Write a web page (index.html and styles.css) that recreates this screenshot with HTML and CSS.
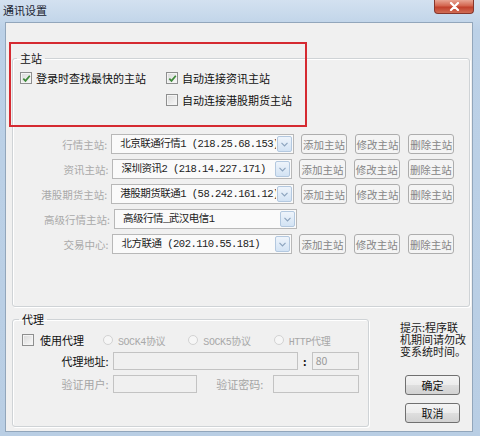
FILE: index.html
```html
<!DOCTYPE html>
<html>
<head>
  <meta charset="utf-8">
  <title>通讯设置</title>
  <link rel="stylesheet" href="styles.css">
</head>
<body>
  <div class="window">
    <div class="titlebar">
      <span class="title">通讯设置</span>
      <span class="close">
        <svg width="11" height="9" viewBox="0 0 11 9"><path d="M2 1 L9 8 M9 1 L2 8" stroke="#fff" stroke-width="2.2" stroke-linecap="round"/></svg>
      </span>
    </div>

    <div class="client">
      <!-- server group -->
      <fieldset class="group group-main">
        <legend>主站</legend>
        <div class="opts">
          <label class="chk"><span class="box on"><svg width="9" height="9" viewBox="0 0 9 9"><path d="M1.3 4.6 L3.5 6.9 L7.8 1.8" stroke="#3f8a3a" stroke-width="1.7" fill="none"/></svg></span>登录时查找最快的主站</label>
          <label class="chk"><span class="box on"><svg width="9" height="9" viewBox="0 0 9 9"><path d="M1.3 4.6 L3.5 6.9 L7.8 1.8" stroke="#3f8a3a" stroke-width="1.7" fill="none"/></svg></span>自动连接资讯主站</label>
          <span></span>
          <label class="chk"><span class="box"></span>自动连接港股期货主站</label>
        </div>

        <div class="servers">
          <div class="srow">
            <span class="lbl">行情主站:</span>
            <div class="combo"><span class="val">北京联通行情1 (218.25.68.153)</span><span class="drop"><svg width="7" height="5" viewBox="0 0 7 5"><path d="M0.5 0.8 L3.5 3.8 L6.5 0.8" stroke="#8da4bf" stroke-width="1.2" fill="none"/></svg></span></div>
            <button class="btn">添加主站</button>
            <button class="btn">修改主站</button>
            <button class="btn">删除主站</button>
          </div>
          <div class="srow">
            <span class="lbl">资讯主站:</span>
            <div class="combo"><span class="val">深圳资讯2 (218.14.227.171)</span><span class="drop"><svg width="7" height="5" viewBox="0 0 7 5"><path d="M0.5 0.8 L3.5 3.8 L6.5 0.8" stroke="#8da4bf" stroke-width="1.2" fill="none"/></svg></span></div>
            <button class="btn">添加主站</button>
            <button class="btn">修改主站</button>
            <button class="btn">删除主站</button>
          </div>
          <div class="srow">
            <span class="lbl">港股期货主站:</span>
            <div class="combo"><span class="val">港股期货联通1 (58.242.161.12)</span><span class="drop"><svg width="7" height="5" viewBox="0 0 7 5"><path d="M0.5 0.8 L3.5 3.8 L6.5 0.8" stroke="#8da4bf" stroke-width="1.2" fill="none"/></svg></span></div>
            <button class="btn">添加主站</button>
            <button class="btn">修改主站</button>
            <button class="btn">删除主站</button>
          </div>
          <div class="srow">
            <span class="lbl">高级行情主站:</span>
            <div class="combo"><span class="val">高级行情_武汉电信1</span><span class="drop"><svg width="7" height="5" viewBox="0 0 7 5"><path d="M0.5 0.8 L3.5 3.8 L6.5 0.8" stroke="#8da4bf" stroke-width="1.2" fill="none"/></svg></span></div>
          </div>
          <div class="srow">
            <span class="lbl">交易中心:</span>
            <div class="combo"><span class="val">北方联通 (202.110.55.181)</span><span class="drop"><svg width="7" height="5" viewBox="0 0 7 5"><path d="M0.5 0.8 L3.5 3.8 L6.5 0.8" stroke="#8da4bf" stroke-width="1.2" fill="none"/></svg></span></div>
            <button class="btn">添加主站</button>
            <button class="btn">修改主站</button>
            <button class="btn">删除主站</button>
          </div>
        </div>
      </fieldset>

      <div class="bottom">
        <!-- proxy group -->
        <fieldset class="group group-proxy">
          <legend>代理</legend>
          <div class="prow row-a">
            <label class="chk use"><span class="box"></span>使用代理</label>
            <span class="radio"><span class="dot"></span>SOCK4协议</span>
            <span class="radio"><span class="dot"></span>SOCK5协议</span>
            <span class="radio"><span class="dot"></span>HTTP代理</span>
          </div>
          <div class="prow">
            <span class="plbl on">代理地址:</span>
            <span class="field addr"></span>
            <span class="sep">:</span>
            <span class="field port">80</span>
          </div>
          <div class="prow">
            <span class="plbl">验证用户:</span>
            <span class="field user"></span>
            <span class="plbl pw">验证密码:</span>
            <span class="field pass"></span>
          </div>
        </fieldset>

        <div class="side">
          <div class="hint">提示:程序联<br>机期间请勿改<br>变系统时间。</div>
          <button class="okbtn first">确定</button>
          <button class="okbtn">取消</button>
        </div>
      </div>
    </div>

    <div class="mark"></div>
  </div>
</body>
</html>
```

FILE: styles.css
```css
body {
  margin: 0;
  font-family: "Noto Sans CJK SC", sans-serif;
  font-size: 11px;
}

.window {
  position: relative;
  width: 480px;
  height: 436px;
  background: linear-gradient(#d3e1f0, #bcd1e7 30px, #b9cee4);
  display: flex;
  flex-direction: column;
}

.titlebar {
  height: 22px;
  flex-shrink: 0;
  display: flex;
  justify-content: space-between;
}

.title {
  padding-left: 3px;
  line-height: 20px;
  font-size: 11px;
  color: #1b2431;
}

.close {
  width: 40px;
  height: 14px;
  margin-right: 6px;
  box-sizing: border-box;
  border: 1px solid #86362c;
  border-top: none;
  border-radius: 0 0 4px 4px;
  background: linear-gradient(#e8a594, #d3654f 45%, #c1402c 55%, #d06d55);
  display: flex;
  align-items: center;
  justify-content: center;
}

.client {
  margin: 0 7px 4px 5px;
  height: 410px;
  box-sizing: border-box;
  border: 1px solid #92a6bb;
  background: #f0f0f0;
  padding: 28px 0 0 6px;
}

/* group boxes */
.group {
  margin: 0;
  box-sizing: border-box;
  min-width: 0;
  border: 1px solid #cfd3d6;
  border-radius: 3px;
  box-shadow: inset 1px 1px 0 #fff, 1px 1px 0 #fff;
}

.group legend {
  font-size: 11px;
  line-height: 14px;
  padding: 0 3px;
  margin-left: -3px;
  color: #111;
}

.group-main {
  width: 458px;
  height: 256px;
  padding: 6px 7px;
}

.opts {
  display: grid;
  grid-template-columns: 146px auto;
  grid-auto-rows: 14px;
  row-gap: 8px;
}

.chk {
  display: flex;
  align-items: center;
  gap: 4px;
  line-height: 14px;
  font-size: 11px;
  color: #111;
  white-space: nowrap;
}

.box {
  width: 12px;
  height: 12px;
  box-sizing: border-box;
  border: 1px solid #8e8f8f;
  background: linear-gradient(135deg, #d9d9d9, #f9f9f9);
  box-shadow: inset 0 0 0 1px #f4f4f4;
  display: flex;
  align-items: center;
  justify-content: center;
}

.servers {
  margin-top: 27px;
  display: flex;
  flex-direction: column;
  gap: 5px;
}

.srow {
  display: flex;
  align-items: center;
  height: 20px;
}

.lbl {
  width: 90px;
  margin-right: 4px;
  text-align: right;
  font-size: 10.5px;
  color: #a9a9a9;
  white-space: nowrap;
}

.combo {
  width: 183px;
  height: 20px;
  margin-right: 7px;
  box-sizing: border-box;
  border: 1px solid #b8b8b8;
  background: #fafafa;
  display: flex;
}

.val {
  flex: 1;
  overflow: hidden;
  white-space: nowrap;
  padding-left: 8px;
  line-height: 18px;
  font-family: "Liberation Mono", "Noto Sans CJK SC", monospace;
  font-size: 10.5px;
  letter-spacing: -0.5px;
  color: #222;
}

.drop {
  width: 15px;
  margin: 1px;
  box-sizing: border-box;
  border: 1px solid #b3c8df;
  border-radius: 2px;
  background: linear-gradient(#eef4fb, #d3e3f4);
  display: flex;
  align-items: center;
  justify-content: center;
}

.btn {
  width: 47px;
  height: 20px;
  margin-right: 8px;
  padding: 0;
  box-sizing: border-box;
  border: 1px solid #adadad;
  border-radius: 3px;
  background: #f4f4f4;
  color: #858585;
  font: 10.5px "Noto Sans CJK SC", sans-serif;
}

.bottom {
  display: flex;
  margin-top: 5px;
}

.group-proxy {
  width: 357px;
  height: 115px;
  padding: 7px 9px;
}

.prow {
  display: flex;
  align-items: center;
  height: 18px;
  margin-top: 5px;
}

.prow.row-a {
  height: 14px;
  margin-top: 0;
}

.chk.use {
  width: 91px;
  gap: 6px;
}

.radio {
  width: 96px;
  display: flex;
  align-items: center;
  gap: 5px;
  font-family: "Liberation Mono", "Noto Sans CJK SC", monospace;
  font-size: 10px;
  letter-spacing: -0.4px;
  color: #a8a8a8;
  white-space: nowrap;
}

.dot {
  width: 10px;
  height: 10px;
  box-sizing: border-box;
  border: 1px solid #d2d2d2;
  border-radius: 50%;
  background: #f6f6f6;
}

.plbl {
  width: 88px;
  margin-right: 4px;
  text-align: right;
  font-size: 11px;
  color: #a5a5a5;
  white-space: nowrap;
}

.plbl.on {
  color: #111;
}

.plbl.pw {
  width: 51px;
  margin-left: 16px;
  margin-right: 10px;
}

.field {
  height: 18px;
  box-sizing: border-box;
  border: 1px solid #c3c3c3;
  background: #f0f0f0;
  line-height: 16px;
  padding-left: 3px;
  font-size: 10.5px;
  color: #999;
}

.field.addr { width: 188px; }
.field.port { width: 48px; }
.field.user { width: 86px; }
.field.pass { width: 87px; }

.sep {
  width: 14px;
  text-align: center;
  color: #111;
  font-weight: bold;
}

.side {
  margin-left: 31px;
  padding-top: 9px;
}

.hint {
  font-size: 11px;
  line-height: 12px;
  color: #1a1a1a;
  white-space: nowrap;
}

.okbtn {
  display: block;
  width: 55px;
  height: 20px;
  margin: 8px 0 0 5px;
  padding: 0;
  box-sizing: border-box;
  border: 1px solid #707070;
  border-radius: 3px;
  background: linear-gradient(#f4f4f4, #ececec 50%, #dedede 51%, #d2d2d2);
  color: #111;
  font: 11px "Noto Sans CJK SC", sans-serif;
}

.okbtn.first {
  margin-top: 18px;
}

/* red outline drawn round the server options */
.mark {
  position: absolute;
  left: 9px;
  top: 42px;
  width: 298px;
  height: 85px;
  box-sizing: border-box;
  border: 2.5px solid #d52a31;
}
```
